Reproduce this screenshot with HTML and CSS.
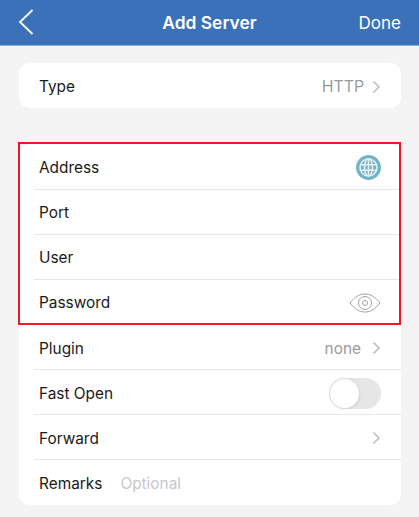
FILE: index.html
```html
<!DOCTYPE html>
<html lang="en">

<head>
    <meta charset="UTF-8">
    <meta name="viewport" content="width=device-width, initial-scale=1.0">
    <title>Add Server</title>
    <link rel="stylesheet" href="styles.css">
</head>

<body>

    <header class="topbar">
        <svg class="back" width="16" height="26" viewBox="0 0 16 26">
            <path d="M14.5 1 L2 13 L14.5 25" fill="none" stroke="#fff" stroke-width="1.8"/>
        </svg>
        <h1 class="title">Add Server</h1>
        <span class="done">Done</span>
    </header>

    <section class="card card-type">
        <div class="row">
            <span class="label">Type</span>
            <span class="value">HTTP</span>
            <svg class="chevron" width="9" height="14" viewBox="0 0 9 14">
                <path d="M1.5 1.5 L7 7 L1.5 12.5" fill="none" stroke="#c0c0c4" stroke-width="1.7"/>
            </svg>
        </div>
    </section>

    <section class="card card-main">
        <div class="highlight">
            <div class="row">
                <span class="label">Address</span>
                <svg class="globe" width="25" height="25" viewBox="0 0 25 25">
                    <circle cx="12.5" cy="12.5" r="12.5" fill="#74b4c8"/>
                    <g fill="none" stroke="#e4f0f4" stroke-width="1.5">
                        <circle cx="12.5" cy="12.5" r="8.5"/>
                        <ellipse cx="12.5" cy="12.5" rx="4" ry="8.5"/>
                        <path d="M12.5 4 V21 M4.8 9.8 H20.2 M4.8 15.2 H20.2"/>
                    </g>
                </svg>
            </div>
            <div class="row"><span class="label">Port</span></div>
            <div class="row"><span class="label">User</span></div>
            <div class="row">
                <span class="label">Password</span>
                <svg class="eye" width="32" height="20" viewBox="0 0 32 20">
                    <g fill="none" stroke="#a0a0a0" stroke-width="1">
                        <path d="M1 10 C6 3.5 11 1 16 1 C21 1 26 3.5 31 10 C26 16.5 21 19 16 19 C11 19 6 16.5 1 10 Z"/>
                        <circle cx="16" cy="10" r="6.5"/>
                        <circle cx="16" cy="10" r="2.5"/>
                    </g>
                </svg>
            </div>
        </div>
        <div class="row">
            <span class="label">Plugin</span>
            <span class="value value-plugin">none</span>
            <svg class="chevron" width="9" height="14" viewBox="0 0 9 14">
                <path d="M1.5 1.5 L7 7 L1.5 12.5" fill="none" stroke="#c0c0c4" stroke-width="1.7"/>
            </svg>
        </div>
        <div class="row">
            <span class="label">Fast Open</span>
            <span class="toggle"><span class="knob"></span></span>
        </div>
        <div class="row">
            <span class="label">Forward</span>
            <svg class="chevron" width="9" height="14" viewBox="0 0 9 14">
                <path d="M1.5 1.5 L7 7 L1.5 12.5" fill="none" stroke="#c0c0c4" stroke-width="1.7"/>
            </svg>
        </div>
        <div class="row">
            <span class="label">Remarks</span>
            <span class="placeholder">Optional</span>
        </div>
    </section>

</body>
</html>
```

FILE: styles.css
```css
body {
    font-family: Inter, Roboto, "Liberation Sans", sans-serif;
    font-size: 15.4px;
    background-color: #f4f4f4;
    color: #1a1a1a;
    margin: 0;
    padding: 0;
    overflow: hidden;
}

.topbar {
    height: 45px;
    background-color: #3b71b8;
    border-bottom: 1px solid #8fb0d8;
    color: #fff;
    display: grid;
    grid-template-columns: 1fr auto 1fr;
    align-items: center;
    padding: 0 18px;
}

.back {
    margin-top: -1px;
}

.title {
    font-size: 17.4px;
    font-weight: 600;
    margin: 0;
}

.done {
    font-size: 17px;
    text-align: right;
}

.card {
    background-color: #fff;
    margin-left: 19px;
    width: 382px;
    border-radius: 11px;
}

.card-type {
    margin-top: 17px;
}

.card-main {
    margin-top: 36px;
    padding-top: 1px;
}

.highlight {
    position: relative;
}

/* red marker drawn on top of the first four rows */
.highlight::after {
    content: "";
    position: absolute;
    top: -3px;
    left: -1px;
    right: 0;
    bottom: 0;
    border: 2px solid #f01528;
    pointer-events: none;
}

.row {
    height: 45px;
    box-sizing: border-box;
    margin-left: 15px;
    padding: 0 20px 0 5px;
    display: flex;
    align-items: center;
    border-bottom: 1px solid #e6e6e6;
}

.row:last-child {
    border-bottom: none;
}

.card-type .row,
.card-main > .row {
    padding-top: 2px;
}

.label {
    flex: none;
}

.value {
    margin-left: auto;
    color: #9a9a9e;
    font-size: 15.8px;
}

.value-plugin {
    font-size: 15.4px;
    margin-right: 3px;
}

.chevron {
    margin-left: 8px;
}

.row > .chevron:nth-child(2) {
    margin-left: auto;
}

.globe,
.eye,
.toggle {
    margin-left: auto;
}

.placeholder {
    color: #c8c8cc;
    margin-left: 18px;
}

.toggle {
    width: 52px;
    height: 31px;
    border-radius: 16px;
    background-color: #e6e6e8;
    display: flex;
    align-items: center;
}

.knob {
    width: 29px;
    height: 29px;
    border-radius: 50%;
    margin-left: 1px;
    background-color: #fff;
    box-shadow: 0 0 0 1px #dcdcdc, 1px 1px 2px rgba(0, 0, 0, 0.12);
}
```
